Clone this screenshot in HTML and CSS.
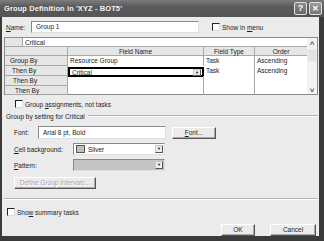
FILE: index.html
```html
<!DOCTYPE html>
<html lang="en">
<head>
<meta charset="UTF-8">
<title>Group Definition</title>
<link rel="stylesheet" href="styles.css">
</head>
<body>
<div class="window">
    <div class="titlebar">
        <span class="title">Group Definition in 'XYZ - BOT5'</span>
        <div class="tbtn">?</div>
        <div class="tbtn close">&#x2715;</div>
    </div>
    <div class="client">
        <div class="name-row">
            <label class="name-label"><u>N</u>ame:</label>
            <div class="textbox name-box">Group 1</div>
            <span class="check"></span>
            <span class="check-text">Show in <u>m</u>enu</span>
        </div>

        <div class="gridbox">
            <div class="table">
                <div class="hd corner"></div>
                <div class="cell edit-row">Critical</div>

                <div class="hd span2"></div>
                <div class="hd center">Field Name</div>
                <div class="hd center">Field Type</div>
                <div class="hd center last">Order</div>

                <div class="hd span2 rh1">Group By</div>
                <div class="cell col">Resource Group</div>
                <div class="cell col">Task</div>
                <div class="cell">Ascending</div>

                <div class="hd span2 rh2">Then By</div>
                <div class="cell col selected">Critical<span class="drop small">&#9660;</span></div>
                <div class="cell col">Task</div>
                <div class="cell">Ascending</div>

                <div class="hd span2 rh3">Then By</div>
                <div class="cell col"></div>
                <div class="cell col"></div>
                <div class="cell"></div>

                <div class="hd span2 rh4">Then By</div>
                <div class="cell col"></div>
                <div class="cell col"></div>
                <div class="cell"></div>
            </div>
            <div class="scrollbar">
                <div class="arrow">&#x2C4;</div>
                <div class="thumb"></div>
                <div class="arrow">&#x2C5;</div>
            </div>
        </div>

        <div class="opt-row indent">
            <span class="check"></span>
            <span class="check-text">Group <u>a</u>ssignments, not tasks</span>
        </div>

        <div class="group-head">
            <span>Group by setting for Critical</span>
            <div class="line"></div>
        </div>

        <div class="field-row font-row">
            <span class="flabel font-label">Font:</span>
            <div class="textbox font-box">Arial 8 pt, Bold</div>
            <div class="btn font-btn"><u>F</u>ont...</div>
        </div>

        <div class="field-row">
            <span class="flabel"><u>C</u>ell background:</span>
            <div class="combo">
                <span class="swatch"></span>Silver
                <span class="drop">&#9660;</span>
            </div>
        </div>

        <div class="field-row">
            <span class="flabel"><u>P</u>attern:</span>
            <div class="combo disabled">
                <span class="drop">&#9660;</span>
            </div>
        </div>

        <div class="btn intervals">Define Group Intervals...</div>

        <div class="separator"></div>

        <div class="opt-row summary">
            <span class="check"></span>
            <span class="check-text">Sho<u>w</u> summary tasks</span>
        </div>

        <div class="buttons">
            <div class="btn ok">OK</div>
            <div class="btn cancel">Cancel</div>
        </div>
    </div>
</div>
</body>
</html>
```

FILE: styles.css
```css
body {
    margin: 0;
    background: #3b3b3b;
    font-family: "Liberation Sans", Arial, sans-serif;
    font-size: 6.5px;
    color: #1c1c1c;
}
.window {
    width: 324px;
    height: 241px;
    display: flex;
    flex-direction: column;
    background: #3b3b3b;
}
.titlebar {
    height: 17px;
    display: flex;
    align-items: center;
    padding: 0 2px 0 4px;
    background: linear-gradient(#7c7c7c, #5a5a5a 40%, #555);
    color: #f4f4f4;
}
.title {
    flex: 1;
    font-size: 7.5px;
    font-weight: bold;
    letter-spacing: 0.1px;
}
.tbtn {
    width: 11px;
    height: 11px;
    margin-left: 2px;
    border: 1px solid #e0e0e0;
    border-radius: 2px;
    background: linear-gradient(#8a8a8a, #6a6a6a);
    color: #fff;
    font-size: 9px;
    font-weight: bold;
    line-height: 11px;
    text-align: center;
}
.tbtn.close {
    font-size: 8px;
    background: linear-gradient(#9a9a9a, #777);
}
.client {
    margin: 0 5px 5px 2px;
    flex: 1;
    background: #ebebeb;
    display: flex;
    flex-direction: column;
}
u {
    text-decoration: underline;
}
.name-row {
    display: flex;
    align-items: center;
    height: 12px;
    margin-top: 4px;
}
.name-label {
    width: 29px;
    padding-left: 4px;
    box-sizing: border-box;
}
.textbox {
    height: 12px;
    box-sizing: border-box;
    background: #fff;
    border: 1px solid #8a8a8a;
    border-right-color: #e0e0e0;
    border-bottom-color: #e0e0e0;
    padding-left: 4px;
    line-height: 10px;
}
.name-box {
    width: 168px;
}
.check {
    width: 8px;
    height: 8px;
    box-sizing: border-box;
    background: #fff;
    border: 1px solid #d8d8d8;
    border-top-color: #222;
    border-left-color: #222;
}
.name-row .check {
    margin-left: 13px;
}
.check-text {
    margin-left: 2px;
}
.gridbox {
    margin: 4px 0 0 2px;
    width: 314px;
    height: 58px;
    box-sizing: border-box;
    display: flex;
    border: 1px solid #8c8c8c;
    background: #fff;
}
.table {
    display: grid;
    grid-template-columns: 18px 45px 136px 51px 52px;
    grid-template-rows: 9px 9px 10px 10px 10px 9px;
    width: 302px;
}
.hd {
    background: #e6e6e6;
    border-right: 1px solid #a8a8a8;
    border-bottom: 1px solid #a8a8a8;
    line-height: 9px;
    white-space: nowrap;
}
.hd.last {
    border-right: none;
}
.center {
    text-align: center;
}
.span2 {
    grid-column: span 2;
}
.edit-row {
    grid-column: span 4;
    padding-left: 7px;
    border-bottom: 1px solid #a8a8a8;
    line-height: 9px;
}
.rh1 { padding-left: 5px; }
.rh2 { padding-left: 7px; }
.rh3 { padding-left: 8px; }
.rh4 { padding-left: 10px; }
.cell {
    line-height: 9px;
    padding-left: 2px;
    white-space: nowrap;
}
.col {
    border-right: 1px solid #a8a8a8;
}
.selected {
    border: 2px solid #000;
    margin: 1px 0 -1px 0;
    line-height: 7px;
    display: flex;
    justify-content: space-between;
    align-items: center;
    padding-right: 0;
}
.drop {
    width: 8px;
    height: 8px;
    box-sizing: border-box;
    background: #ececec;
    border: 1px solid #c8c8c8;
    border-right-color: #555;
    border-bottom-color: #555;
    font-size: 4px;
    line-height: 6px;
    text-align: center;
    color: #111;
}
.drop.small {
    height: 7px;
    margin-right: 1px;
}
.scrollbar {
    width: 12px;
    background: #f3f3f3;
    display: flex;
    flex-direction: column;
    align-items: center;
}
.arrow {
    height: 9px;
    font-size: 8px;
    line-height: 11px;
    color: #555;
    font-weight: bold;
}
.thumb {
    width: 10px;
    height: 13px;
    margin: 2px 0 auto;
    background: #e2e2e2;
    border: 1px solid #ececec;
    box-sizing: border-box;
}
.opt-row {
    display: flex;
    align-items: center;
    height: 8px;
}
.opt-row.indent {
    margin: 5px 0 0 13px;
}
.group-head {
    display: flex;
    align-items: center;
    height: 8px;
    margin: 4px 0 0 4px;
}
.group-head .line {
    flex: 1;
    margin: 0 1px 0 3px;
    border-top: 1px solid #b2b2b2;
    border-bottom: 1px solid #fff;
}
.field-row {
    display: flex;
    align-items: center;
    height: 12px;
    margin-top: 4px;
}
.font-row {
    margin-top: 6px;
    height: 13px;
}
.flabel {
    width: 71px;
    padding-left: 12px;
    box-sizing: border-box;
}
.font-label {
    width: 36px;
}
.font-box {
    width: 128px;
    height: 13px;
    line-height: 11px;
}
.btn {
    height: 12px;
    box-sizing: border-box;
    background: #ebebeb;
    border: 1px solid #fff;
    border-right-color: #555;
    border-bottom-color: #555;
    box-shadow: inset -1px -1px 0 #a8a8a8;
    text-align: center;
    line-height: 10px;
}
.font-btn {
    width: 44px;
    margin-left: 6px;
}
.combo {
    width: 92px;
    height: 12px;
    box-sizing: border-box;
    display: flex;
    align-items: center;
    background: #fff;
    border: 1px solid #8a8a8a;
    border-right-color: #e0e0e0;
    border-bottom-color: #e0e0e0;
    padding: 0 1px 0 2px;
}
.combo .drop {
    margin-left: auto;
}
.combo.disabled {
    background: #c4c4c4;
}
.swatch {
    width: 9px;
    height: 8px;
    box-sizing: border-box;
    background: #c0c0c0;
    border: 1px solid #555;
    margin-right: 3px;
}
.intervals {
    width: 82px;
    margin: 6px 0 0 12px;
    color: #a6a6a6;
    text-shadow: 1px 1px 0 #fff;
}
.separator {
    margin: 9px 0 0 2px;
    width: 314px;
    border-top: 1px solid #b2b2b2;
    border-bottom: 1px solid #fff;
}
.opt-row.summary {
    margin: 8px 0 0 5px;
}
.buttons {
    display: flex;
    margin: 8px 0 0 219px;
}
.ok {
    width: 34px;
}
.cancel {
    width: 46px;
    margin-left: 15px;
}
```
